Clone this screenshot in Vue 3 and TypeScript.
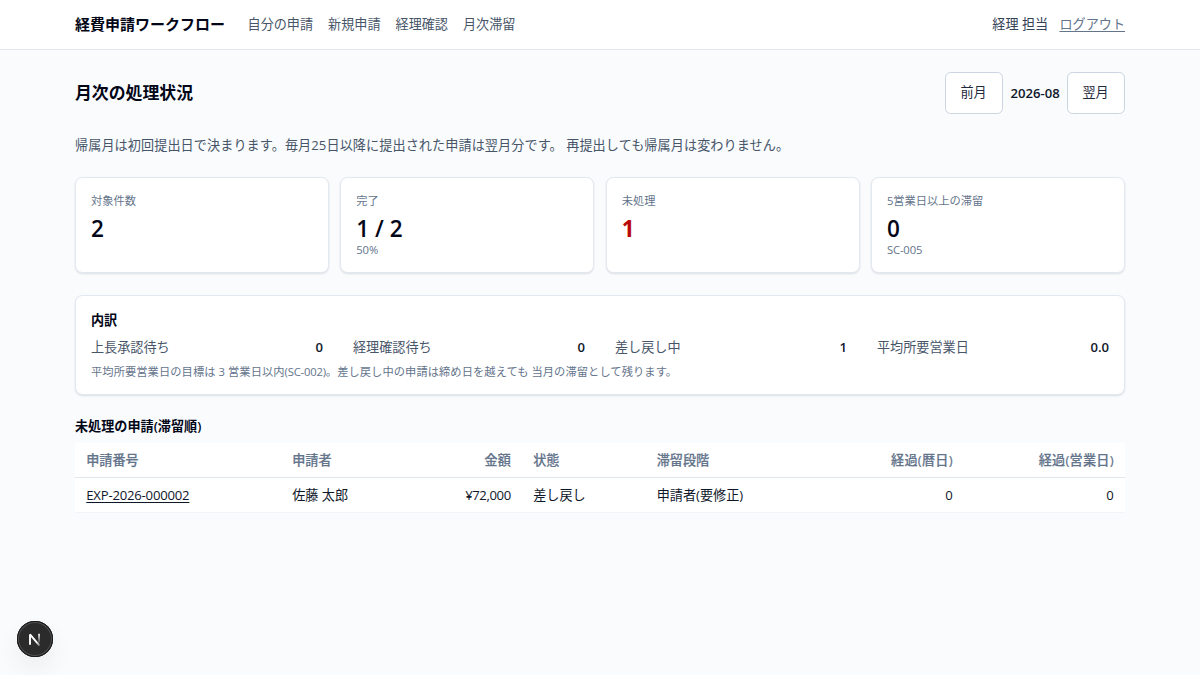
<script setup lang="ts">
interface Stat { label: string; value: string; note?: string; alert?: boolean }
interface Count { label: string; value: string }

const links: string[] = ['自分の申請', '新規申請', '経理確認', '月次滞留']
const stats: Stat[] = [
  { label: '対象件数', value: '2' },
  { label: '完了', value: '1 / 2', note: '50%' },
  { label: '未処理', value: '1', alert: true },
  { label: '5営業日以上の滞留', value: '0', note: 'SC-005' },
]
const counts: Count[] = [
  { label: '上長承認待ち', value: '0' },
  { label: '経理確認待ち', value: '0' },
  { label: '差し戻し中', value: '1' },
  { label: '平均所要営業日', value: '0.0' },
]
</script>

<template>
  <div class="page">
    <header class="top">
      <div class="wrap bar">
        <strong class="brand">経費申請ワークフロー</strong>
        <nav class="nav">
          <a v-for="l in links" :key="l">{{ l }}</a>
        </nav>
        <span class="user">経理 担当</span>
        <a class="logout">ログアウト</a>
      </div>
    </header>

    <main class="wrap">
      <div class="heading">
        <h1>月次の処理状況</h1>
        <div class="months">
          <button type="button">前月</button>
          <span class="month">2026-08</span>
          <button type="button">翌月</button>
        </div>
      </div>
      <p class="lead">帰属月は初回提出日で決まります。毎月25日以降に提出された申請は翌月分です。 再提出しても帰属月は変わりません。</p>

      <section class="stats">
        <div v-for="s in stats" :key="s.label" class="card stat">
          <div class="label">{{ s.label }}</div>
          <div class="value" :class="{ alert: s.alert }">{{ s.value }}</div>
          <div v-if="s.note" class="note">{{ s.note }}</div>
        </div>
      </section>

      <section class="card detail">
        <h2>内訳</h2>
        <dl>
          <div v-for="c in counts" :key="c.label">
            <dt>{{ c.label }}</dt>
            <dd>{{ c.value }}</dd>
          </div>
        </dl>
        <p>平均所要営業日の目標は 3 営業日以内<span class="code">(SC-002)</span>。差し戻し中の申請は締め日を越えても 当月の滞留として残ります。</p>
      </section>

      <h2 class="list-title">未処理の申請(滞留順)</h2>
      <table>
        <colgroup>
          <col class="c1"><col class="c2"><col class="c3"><col class="c4"><col class="c5"><col class="c6"><col class="c7">
        </colgroup>
        <thead>
          <tr>
            <th>申請番号</th><th>申請者</th><th class="r">金額</th><th>状態</th><th>滞留段階</th>
            <th class="r wide">経過(暦日)</th><th class="r wide">経過(営業日)</th>
          </tr>
        </thead>
        <tbody>
          <tr>
            <td><a class="id">EXP-2026-000002</a></td><td>佐藤 太郎</td><td class="r num">¥72,000</td>
            <td>差し戻し</td><td>申請者(要修正)</td><td class="r">0</td><td class="r">0</td>
          </tr>
        </tbody>
      </table>
    </main>

    <div class="dev">
      <svg viewBox="0 0 36 36" width="36" height="36" fill="none">
        <defs>
          <linearGradient id="stem" x1="0" y1="13" x2="0" y2="23" gradientUnits="userSpaceOnUse">
            <stop stop-color="#fff" /><stop offset="1" stop-color="#fff" stop-opacity="0" />
          </linearGradient>
          <linearGradient id="diag" x1="13" y1="13" x2="23.5" y2="25" gradientUnits="userSpaceOnUse">
            <stop offset=".65" stop-color="#fff" /><stop offset="1" stop-color="#fff" stop-opacity=".2" />
          </linearGradient>
        </defs>
        <path d="M13 23.7V13.4L22.5 24.6" stroke="url(#diag)" stroke-width="1.9" stroke-linejoin="bevel" />
        <rect x="21.2" y="12.8" width="1.7" height="10.5" fill="url(#stem)" />
      </svg>
    </div>
  </div>
</template>

<style>
body { margin: 0; background: #f8fafc; }
</style>

<style scoped>
.page {
  position: relative;
  height: 675px;
  overflow: hidden;
  background: #f9fbfd;
  color: #0f172a;
  font: 13.125px/18.75px "Open Sans", "Noto Sans CJK JP", sans-serif;
}
.page * { box-sizing: border-box; }
.wrap { width: 1050px; margin: 0 auto; }
.top { height: 50px; background: #fff; border-bottom: 1px solid #e2e8f0; }
.bar { display: flex; align-items: center; height: 48px; }
.brand { font-size: 15px; font-weight: 600; margin-right: 22.5px; color: #020617; }
.nav { display: flex; gap: 15px; color: #475569; }
.user { margin-left: auto; color: #334155; }
.logout { margin-left: 11.25px; color: #64748b; text-decoration: underline; text-underline-offset: 2px; }

.heading { display: flex; justify-content: space-between; align-items: center; height: 42px; margin-top: 22px; }
h1 { margin: 0; font-size: 16.875px; font-weight: 600; color: #020617; }
.months { display: flex; align-items: center; gap: 7.5px; }
button {
  width: 58px; height: 42px; padding: 0 1px 1px 0;
  border: 1px solid #cbd5e1; border-radius: 5.6px;
  background: #fff; color: #1e293b; font: inherit;
}
.month { width: 49px; font-weight: 600; letter-spacing: 0; white-space: nowrap; }
.num { letter-spacing: -.4px; }
.lead { margin: 22px 0 0; color: #475569; line-height: 19px; letter-spacing: .09px; }

.card { background: #fff; border: 1px solid #e2e8f0; border-radius: 7.5px; box-shadow: 0 1px 2px rgba(15, 23, 42, .12); }
.stats { display: grid; grid-template-columns: repeat(4, 1fr); gap: 11.25px; margin-top: 22px; }
.stat { height: 96px; padding: 15px; }
.label, .note { font-size: 11.25px; line-height: 15px; color: #64748b; }
.note { letter-spacing: -.15px; }
.value { margin-top: 8px; font-size: 22.5px; line-height: 26px; font-weight: 600; color: #020617; }
.alert { color: #b90a0a; font-weight: 700; }

.detail { height: 100px; margin-top: 22px; padding: 15px; }
h2 { margin: 0; font-size: 13.125px; font-weight: 600; line-height: 19px; color: #020617; }
dl { display: grid; grid-template-columns: repeat(4, 1fr); gap: 30px; margin: 7.5px 0 0; }
dl div { display: flex; justify-content: space-between; }
dt { color: #475569; }
dd { margin: 0; font-weight: 600; }
.detail p { margin: 8px 0 0; font-size: 11.25px; line-height: 15px; color: #64748b; letter-spacing: .07px; }
.code { letter-spacing: -.2px; }

.list-title { margin-top: 22px; }
table { width: 100%; margin-top: 7px; border-collapse: collapse; table-layout: fixed; background: #fff; }
th, td { padding: 1.5px 11.25px 0; text-align: left; white-space: nowrap; }
th { height: 34px; color: #64748b; font-weight: 500; -webkit-text-stroke: .2px #64748b; }
td { height: 35px; }
tr { border-bottom: 1px solid #e2e8f0; }
tbody tr { border-color: #f1f5f9; }
.r { text-align: right; }
.wide { letter-spacing: .25px; }
.c1 { width: 206px; } .c2 { width: 140px; } .c3 { width: 101px; } .c4 { width: 123.5px; }
.c5 { width: 160px; } .c6 { width: 158.5px; } .c7 { width: 161px; }
.id { text-decoration: underline; text-underline-offset: 2px; letter-spacing: -.2px; }

.dev {
  position: absolute; left: 17px; top: 621px; width: 36px; height: 36px; border-radius: 50%;
  background: #2b2b2b;
  box-shadow: inset 0 0 0 1px #171717, inset 0 0 0 2px #505050, 0 12px 24px rgba(0, 0, 0, .06);
}
.dev svg { display: block; }
</style>
